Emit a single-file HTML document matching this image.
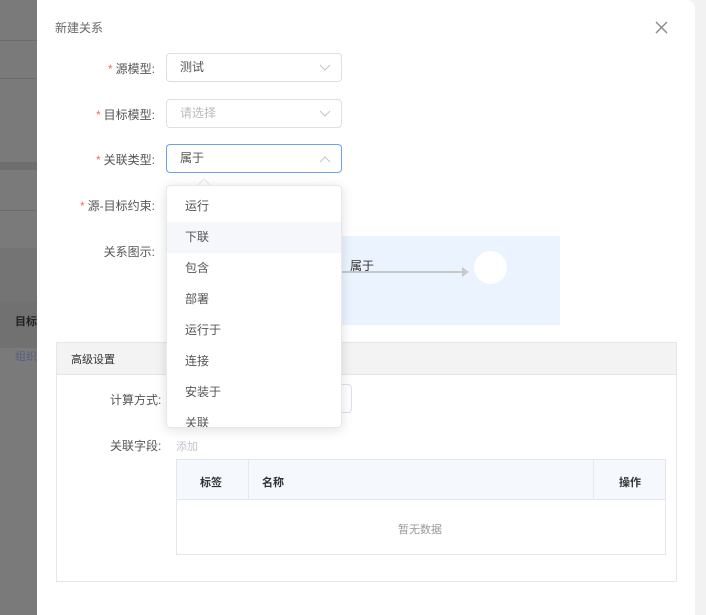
<!DOCTYPE html>
<html><head><meta charset="utf-8"><style>
*{box-sizing:border-box;margin:0;padding:0}
body{width:706px;height:615px;overflow:hidden;position:relative;background:#7d7d7d;font-family:"Liberation Sans","Noto Sans CJK SC",sans-serif;font-size:12px;color:#333}
.abs{position:absolute}
.modal{left:37px;top:0;width:658px;height:615px;background:#fff;border-top-right-radius:8px}
.right{left:685px;top:0;width:21px;height:615px;background:#f2f2f2}
.lbl{width:120px;text-align:right;color:#555;font-size:12px;left:35px}
.lbl i{color:#f56c6c;font-style:normal;margin-right:3px}
.sel{left:166px;width:176px;height:29px;border:1px solid #dcdfe6;border-radius:4px;padding-left:13px;line-height:27px;color:#555}
.sel svg{position:absolute;right:10px;top:10px}
.dd{left:166px;top:185px;width:176px;height:243px;background:#fff;border:1px solid #e4e7ed;border-radius:4px;box-shadow:0 2px 12px rgba(0,0,0,.12);overflow:hidden}
.dd div{height:31px;line-height:31px;padding-left:18px;color:#555}
</style></head><body>
<div class="abs" style="left:0;top:0;width:37px;height:615px;background:#7a7a7a"></div>
<div class="abs" style="left:0;top:40px;width:37px;height:1px;background:#6c6c6c"></div>
<div class="abs" style="left:0;top:78px;width:37px;height:1px;background:#6c6c6c"></div>
<div class="abs" style="left:0;top:162px;width:37px;height:8px;background:#6e6e6e"></div>
<div class="abs" style="left:0;top:210px;width:37px;height:1px;background:#6c6c6c"></div>
<div class="abs" style="left:0;top:248px;width:37px;height:100px;background:#747474"></div>
<div class="abs" style="left:0;top:302px;width:37px;height:46px;background:#717171"></div>
<div class="abs" style="left:15px;top:313px;font-size:11px;color:#222;font-weight:bold">目标</div>
<div class="abs" style="left:15px;top:348px;font-size:11px;color:#556080">组织</div>
<div class="abs right"></div>
<div class="abs modal"></div>
<div class="abs" style="left:55px;top:19px;font-size:12px;color:#666">新建关系</div>
<svg class="abs" style="left:655px;top:21px" width="13" height="13" viewBox="0 0 13 13"><path d="M1 1L12 12M12 1L1 12" stroke="#888" stroke-width="1.4"/></svg>

<div class="abs lbl" style="top:60px"><i>*</i>源模型:</div>
<div class="abs sel" style="top:53px">测试<svg width="12" height="8"><path d="M1 1l5 5 5-5" fill="none" stroke="#c0c4cc"/></svg></div>
<div class="abs lbl" style="top:106px"><i>*</i>目标模型:</div>
<div class="abs sel" style="top:99px;color:#bbb">请选择<svg width="12" height="8"><path d="M1 1l5 5 5-5" fill="none" stroke="#c0c4cc"/></svg></div>
<div class="abs lbl" style="top:151px"><i>*</i>关联类型:</div>
<div class="abs sel" style="top:144px;border-color:#6a9ff5">属于<svg width="12" height="8"><path d="M1 7l5-5 5 5" fill="none" stroke="#c0c4cc"/></svg></div>
<div class="abs lbl" style="top:197px"><i>*</i>源-目标约束:</div>
<div class="abs lbl" style="top:243px">关系图示:</div>

<div class="abs" style="left:166px;top:236px;width:394px;height:89px;background:#ebf3fe"></div>
<div class="abs" style="left:342px;top:271px;width:124px;height:2px;background:#c8c8c8"></div>
<svg class="abs" style="left:462px;top:267px" width="8" height="10"><path d="M0 0L7 5L0 10Z" fill="#c8c8c8"/></svg>
<div class="abs" style="left:350px;top:257px;font-size:12px;color:#333">属于</div>
<div class="abs" style="left:474px;top:251px;width:33px;height:33px;border-radius:50%;background:#fff"></div>

<div class="abs" style="left:56px;top:342px;width:621px;height:240px;border:1px solid #e6e6e6"></div>
<div class="abs" style="left:57px;top:343px;width:619px;height:32px;background:#f3f3f3;border-bottom:1px solid #e6e6e6"></div>
<div class="abs" style="left:71px;top:351px;font-size:11px;color:#333">高级设置</div>
<div class="abs" style="left:300px;top:384px;width:52px;height:29px;border:1px solid #dcdfe6;border-radius:4px"></div>
<div class="abs" style="left:110px;top:391px;color:#555">计算方式:</div>
<div class="abs" style="left:110px;top:437px;color:#555">关联字段:</div>
<div class="abs" style="left:176px;top:438px;color:#c0c4cc;font-size:11px">添加</div>
<div class="abs" style="left:176px;top:459px;width:490px;height:96px;border:1px solid #e3e6eb"></div>
<div class="abs" style="left:177px;top:460px;width:488px;height:40px;background:#f5f8fd;border-bottom:1px solid #e3e6eb"></div>
<div class="abs" style="left:248px;top:460px;width:1px;height:40px;background:#e6e8ee"></div>
<div class="abs" style="left:593px;top:460px;width:1px;height:40px;background:#e6e8ee"></div>
<div class="abs" style="left:200px;top:474px;font-size:11px;font-weight:bold;color:#333">标签</div>
<div class="abs" style="left:262px;top:474px;font-size:11px;font-weight:bold;color:#333">名称</div>
<div class="abs" style="left:619px;top:474px;font-size:11px;font-weight:bold;color:#333">操作</div>
<div class="abs" style="left:398px;top:521px;font-size:11px;color:#999">暂无数据</div>

<svg class="abs" style="left:197px;top:179px" width="14" height="7"><path d="M0 7L7 0L14 7Z" fill="#fff" stroke="#e4e7ed"/><path d="M1 7.5H13" stroke="#fff" stroke-width="2"/></svg>
<div class="abs dd">
<div style="margin-top:5px">运行</div>
<div style="background:#f5f7fa">下联</div>
<div>包含</div><div>部署</div><div>运行于</div><div>连接</div><div>安装于</div><div>关联</div>
</div>
</body></html>
